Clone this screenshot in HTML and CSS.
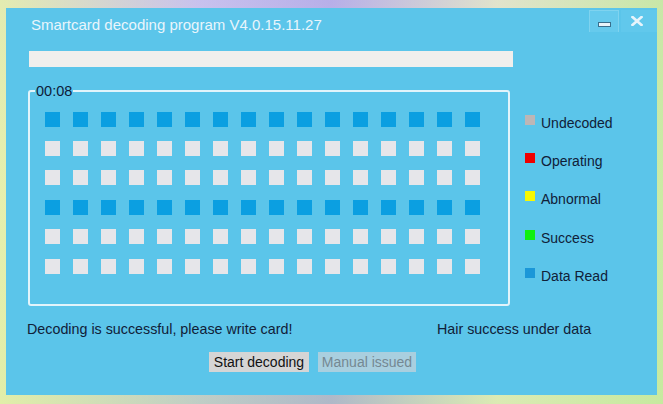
FILE: index.html
```html
<!DOCTYPE html>
<html>
<head>
<meta charset="utf-8">
<link rel="stylesheet" href="styles.css">
</head>
<body>
<div class="window">
  <div class="titlebar">
    <div class="title">Smartcard decoding program V4.0.15.11.27</div>
    <div class="tb-buttons">
      <div class="tb-btn tb-min"><span class="min-glyph"></span></div>
      <div class="tb-btn tb-close">
        <svg width="12" height="10" viewBox="0 0 12 10"><path d="M1.5 1 L10.5 9 M10.5 1 L1.5 9" stroke="#e8f4fb" stroke-width="2.6" stroke-linecap="square"/></svg>
      </div>
    </div>
  </div>
  <div class="progress"></div>
  <div class="main">
    <fieldset class="group">
      <legend class="timer">00:08</legend>
      <div class="grid" id="grid"></div>
    </fieldset>
    <div class="legend-list">
      <div class="item"><span class="sw sw-undecoded"></span><span>Undecoded</span></div>
      <div class="item"><span class="sw sw-operating"></span><span>Operating</span></div>
      <div class="item"><span class="sw sw-abnormal"></span><span>Abnormal</span></div>
      <div class="item"><span class="sw sw-success"></span><span>Success</span></div>
      <div class="item"><span class="sw sw-read"></span><span>Data Read</span></div>
    </div>
  </div>
  <div class="status">
    <span class="status-left">Decoding is successful, please write card!</span>
    <span class="status-right">Hair success under data</span>
  </div>
  <div class="actions">
    <button class="btn btn-start">Start decoding</button>
    <button class="btn btn-manual">Manual issued</button>
  </div>
</div>
<script>
  var g = document.getElementById('grid');
  for (var r = 0; r < 6; r++) {
    for (var c = 0; c < 16; c++) {
      var d = document.createElement('div');
      d.className = 'cell ' + ((r === 0 || r === 3) ? 'cell-read' : 'cell-empty');
      g.appendChild(d);
    }
  }
</script>
</body>
</html>
```

FILE: styles.css
```css
html, body {
  margin: 0;
  padding: 0;
}
body {
  width: 663px;
  height: 404px;
  overflow: hidden;
  font-family: "Liberation Sans", Arial, sans-serif;
  font-size: 14px;
  background:
    linear-gradient(90deg, rgba(230,240,170,0.9) 0%, rgba(200,190,240,0.5) 30%, rgba(170,160,230,0.6) 50%, rgba(235,240,190,0.7) 75%, rgba(200,235,160,0.9) 100%),
    linear-gradient(180deg, #c9c4ec 0%, #e6ecc6 50%, #b5dd9a 100%);
}
.window {
  width: 651px;
  height: 387px;
  margin: 8px 0 0 6px;
  background: #5bc5ea;
  display: flex;
  flex-direction: column;
}
.titlebar {
  height: 34px;
  display: flex;
  align-items: flex-start;
  padding-left: 25px;
}
.title {
  margin-top: 8px;
  line-height: 18px;
  font-size: 15px;
  color: #e9f5fc;
}
.tb-buttons {
  margin-left: auto;
  margin-top: 2px;
  display: flex;
  gap: 2px;
}
.tb-btn {
  width: 30px;
  height: 22px;
  box-sizing: border-box;
  display: flex;
  align-items: center;
  justify-content: center;
}
.tb-min {
  background: #66caed;
  border: 1px solid #7fd3ef;
  border-bottom: none;
}
.tb-close {
  width: 36px;
  padding-right: 4px;
  background: #61c8ec;
}
.min-glyph {
  display: block;
  width: 11px;
  height: 3px;
  margin-top: 6px;
  background: #e8f4fb;
  border: 1px solid #3a6f8c;
}
.progress {
  margin: 9px 0 0 23px;
  width: 484px;
  height: 16px;
  background: #f0efed;
}
.main {
  display: flex;
  margin-top: 16px;
  padding-left: 22px;
}
.group {
  margin: 0;
  width: 482px;
  box-sizing: border-box;
  border: 2px solid #e2f4fb;
  border-radius: 3px;
  padding: 12.7px 0 30px 15px;
}
.timer {
  margin-left: -10px;
  padding: 0 1px;
  line-height: 16px;
  font-size: 14.5px;
  color: #0d1c3a;
}
.grid {
  display: grid;
  grid-template-columns: repeat(16, 15px);
  grid-auto-rows: 15px;
  column-gap: 13px;
  row-gap: 14.4px;
}
.cell-read {
  background: #0b9fe1;
}
.cell-empty {
  background: #e6e6ea;
}
.legend-list {
  margin-left: 15px;
  padding-top: 32px;
  display: flex;
  flex-direction: column;
  gap: 22.2px;
}
.item {
  display: flex;
  align-items: flex-start;
  line-height: 16px;
  color: #102038;
}
.sw {
  width: 10px;
  height: 10px;
  margin-right: 6px;
  flex: none;
}
.sw-undecoded { background: #bdb6b6; }
.sw-operating { background: #f00000; }
.sw-abnormal { background: #f8f800; }
.sw-success { background: #10f010; }
.sw-read { background: #1b97d8; }
.status {
  margin-top: 15px;
  padding-left: 21px;
  display: flex;
  line-height: 16px;
  font-size: 14.3px;
  color: #102038;
}
.status-left {
  width: 410px;
}
.actions {
  margin-top: 15px;
  padding-left: 203px;
  display: flex;
  gap: 9px;
}
.btn {
  height: 20px;
  padding: 0;
  border: none;
  font-family: "Liberation Sans", Arial, sans-serif;
  font-size: 14px;
  line-height: 20px;
}
.btn-start {
  width: 100px;
  background: #d5d5d5;
  color: #111111;
}
.btn-manual {
  width: 98px;
  background: #a9cfdf;
  color: #758892;
}
```
